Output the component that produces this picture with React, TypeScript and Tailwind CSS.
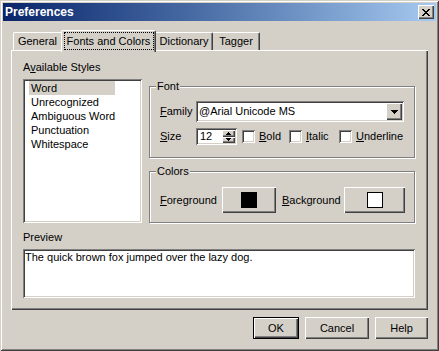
import React from "react";

const raisedBtn =
  "shadow-[inset_1px_1px_#ffffff,inset_-1px_-1px_#404040,inset_-2px_-2px_#808080]";
const sunken =
  "shadow-[inset_1px_1px_#808080,inset_-1px_-1px_#ffffff,inset_2px_2px_#404040,inset_-2px_-2px_#d4d0c8]";

function U({ children }: { children: React.ReactNode }) {
  return <span className="underline underline-offset-[1px]">{children}</span>;
}

function Group({
  label,
  className,
  children,
}: {
  label: string;
  className: string;
  children: React.ReactNode;
}) {
  return (
    <div
      className={`relative border border-[#808080] shadow-[inset_1px_1px_#ffffff,1px_1px_#ffffff] ${className}`}
    >
      <span className="absolute left-[6px] top-[-7px] bg-[#d4d0c8] px-[1px] leading-[13px]">
        {label}
      </span>
      {children}
    </div>
  );
}

function Check({ label }: { label: React.ReactNode }) {
  return (
    <div className="flex items-center">
      <div className={`w-[13px] h-[13px] bg-white ${sunken}`} />
      <span className="ml-[4px]">{label}</span>
    </div>
  );
}

function CloseGlyph() {
  const rows: [number, number][][] = [
    [[0, 2], [6, 2]],
    [[1, 2], [5, 2]],
    [[2, 4]],
    [[3, 2]],
    [[2, 4]],
    [[1, 2], [5, 2]],
    [[0, 2], [6, 2]],
  ];
  return (
    <svg width="8" height="7" viewBox="0 0 8 7" shapeRendering="crispEdges">
      {rows.map((r, y) =>
        r.map(([x, w], i) => <rect key={`${y}-${i}`} x={x} y={y} width={w} height={1} fill="#000" />)
      )}
    </svg>
  );
}

function DownArrow({ w }: { w: number }) {
  const rows = [];
  for (let i = 0; i * 2 < w; i++) {
    rows.push(<rect key={i} x={i} y={i} width={w - i * 2} height={1} fill="#000" />);
  }
  return (
    <svg width={w} height={Math.ceil(w / 2)} shapeRendering="crispEdges">
      {rows}
    </svg>
  );
}

function UpArrow({ w }: { w: number }) {
  const h = Math.ceil(w / 2);
  const rows = [];
  for (let i = 0; i * 2 < w; i++) {
    rows.push(<rect key={i} x={i} y={h - 1 - i} width={w - i * 2} height={1} fill="#000" />);
  }
  return (
    <svg width={w} height={h} shapeRendering="crispEdges">
      {rows}
    </svg>
  );
}

export default function App() {
  const items = ["Word", "Unrecognized", "Ambiguous Word", "Punctuation", "Whitespace"];
  return (
    <div className="w-[439px] h-[351px] bg-[#d4d0c8] p-[3px] flex flex-col text-[11px] leading-[13px] text-black font-['Liberation_Sans',Arial,sans-serif] shadow-[inset_1px_1px_#d4d0c8,inset_-1px_-1px_#404040,inset_2px_2px_#ffffff,inset_-2px_-2px_#808080]">
      {/* Title bar */}
      <div className="h-[18px] flex items-center justify-between bg-linear-to-r from-[#0a246a] to-[#a6caf0] pl-[2px] pr-[2px]">
        <span className="text-white font-bold text-[12px]">Preferences</span>
        <div
          className={`w-[16px] h-[14px] bg-[#d4d0c8] flex items-center justify-center ${raisedBtn}`}
        >
          <CloseGlyph />
        </div>
      </div>

      {/* Tabs */}
      <div className="mt-[9px] ml-[10px] h-[22px] flex items-end">
        <div className="w-[48px] h-[18px] mb-[2px] border-l border-t border-white rounded-tl-[2px] flex items-center justify-center">
          General
        </div>
        <div className="relative z-10 w-[95px] h-[22px] bg-[#d4d0c8] border-l border-t border-white border-r border-r-[#404040] shadow-[inset_-1px_0_#808080] rounded-t-[2px] flex justify-center pt-[1px]">
          <span className="w-[90px] h-[18px] border border-dotted border-black flex items-center justify-center">
            Fonts and Colors
          </span>
        </div>
        <div className="w-[57px] h-[18px] mb-[2px] border-t border-white border-r border-r-[#404040] shadow-[inset_-1px_0_#808080] rounded-tr-[2px] flex items-center justify-center">
          Dictionary
        </div>
        <div className="w-[47px] h-[18px] mb-[2px] border-t border-white border-r border-r-[#404040] shadow-[inset_-1px_0_#808080] rounded-tr-[2px] flex items-center justify-center">
          Tagger
        </div>
      </div>

      {/* Panel */}
      <div className="-mt-[2px] ml-[8px] w-[417px] h-[260px] pt-[11px] pl-[12px] flex flex-col shadow-[inset_1px_1px_#ffffff,inset_-1px_-1px_#404040,inset_-2px_-2px_#808080]">
        <div className="flex">
          <div className="w-[119px] flex flex-col">
            <div className="h-[13px]">
              A<U>v</U>ailable Styles
            </div>
            <div className={`mt-[5px] h-[144px] bg-white pt-[2px] pl-[6px] ${sunken}`}>
              {items.map((it, i) => (
                <div
                  key={it}
                  className={`h-[14px] w-[86px] pl-[2px] flex items-center whitespace-nowrap ${i === 0 ? "bg-[#d4d0c8]" : ""}`}
                >
                  {it}
                </div>
              ))}
            </div>
          </div>

          <div className="ml-[7px] pt-[25px] flex flex-col">
            <Group label="Font" className="w-[266px] h-[72px] pt-[14px] pl-[10px]">
              <div className="flex items-center h-[21px]">
                <span className="w-[36px]">
                  <U>F</U>amily
                </span>
                <div className={`w-[208px] h-[21px] bg-white flex items-center pl-[3px] pr-[2px] ${sunken}`}>
                  <span className="flex-1">@Arial Unicode MS</span>
                  <div
                    className={`w-[16px] h-[17px] bg-[#d4d0c8] flex items-center justify-center ${raisedBtn}`}
                  >
                    <DownArrow w={7} />
                  </div>
                </div>
              </div>
              <div className="flex items-center mt-[6px] h-[17px]">
                <span className="w-[36px]">
                  <U>S</U>ize
                </span>
                <div className={`w-[41px] h-[17px] bg-white flex items-center pl-[4px] pr-[2px] ${sunken}`}>
                  <span className="flex-1">12</span>
                  <div className="w-[13px] h-[13px] flex flex-col">
                    <div className={`h-[6.5px] flex-1 bg-[#d4d0c8] flex items-center justify-center ${raisedBtn}`}>
                      <UpArrow w={5} />
                    </div>
                    <div className={`h-[6.5px] flex-1 bg-[#d4d0c8] flex items-center justify-center ${raisedBtn}`}>
                      <DownArrow w={5} />
                    </div>
                  </div>
                </div>
                <div className="ml-[5px] w-[47px]">
                  <Check label={<><U>B</U>old</>} />
                </div>
                <div className="w-[50px]">
                  <Check label={<><U>I</U>talic</>} />
                </div>
                <div>
                  <Check label={<><U>U</U>nderline</>} />
                </div>
              </div>
            </Group>

            <Group label="Colors" className="mt-[13px] w-[266px] h-[52px] pt-[15px] pl-[10px]">
              <div className="flex items-center">
                <span className="w-[62px]">
                  <U>F</U>oreground
                </span>
                <div
                  className={`w-[54px] h-[26px] bg-[#d4d0c8] flex items-center justify-center ${raisedBtn}`}
                >
                  <div className="w-[16px] h-[16px] bg-black" />
                </div>
                <span className="ml-[6px] w-[62px]">
                  <U>B</U>ackground
                </span>
                <div
                  className={`w-[61px] h-[26px] bg-[#d4d0c8] flex items-center justify-center ${raisedBtn}`}
                >
                  <div className="w-[16px] h-[16px] bg-white border border-black" />
                </div>
              </div>
            </Group>
          </div>
        </div>

        <div className="mt-[8px] h-[13px]">Preview</div>
        <div className={`mt-[5px] w-[392px] h-[49px] bg-white pt-[2px] pl-[2px] ${sunken}`}>
          The quick brown fox jumped over the lazy dog.
        </div>
      </div>

      {/* Buttons */}
      <div className="mt-[7px] ml-[8px] w-[417px] flex justify-end gap-[6px]">
        <div className="w-[46px] h-[22px] border border-black">
          <div className={`w-full h-full flex items-center justify-center ${raisedBtn}`}>OK</div>
        </div>
        <div className={`w-[64px] h-[22px] flex items-center justify-center ${raisedBtn}`}>Cancel</div>
        <div className={`w-[53px] h-[22px] flex items-center justify-center ${raisedBtn}`}>Help</div>
      </div>
    </div>
  );
}
